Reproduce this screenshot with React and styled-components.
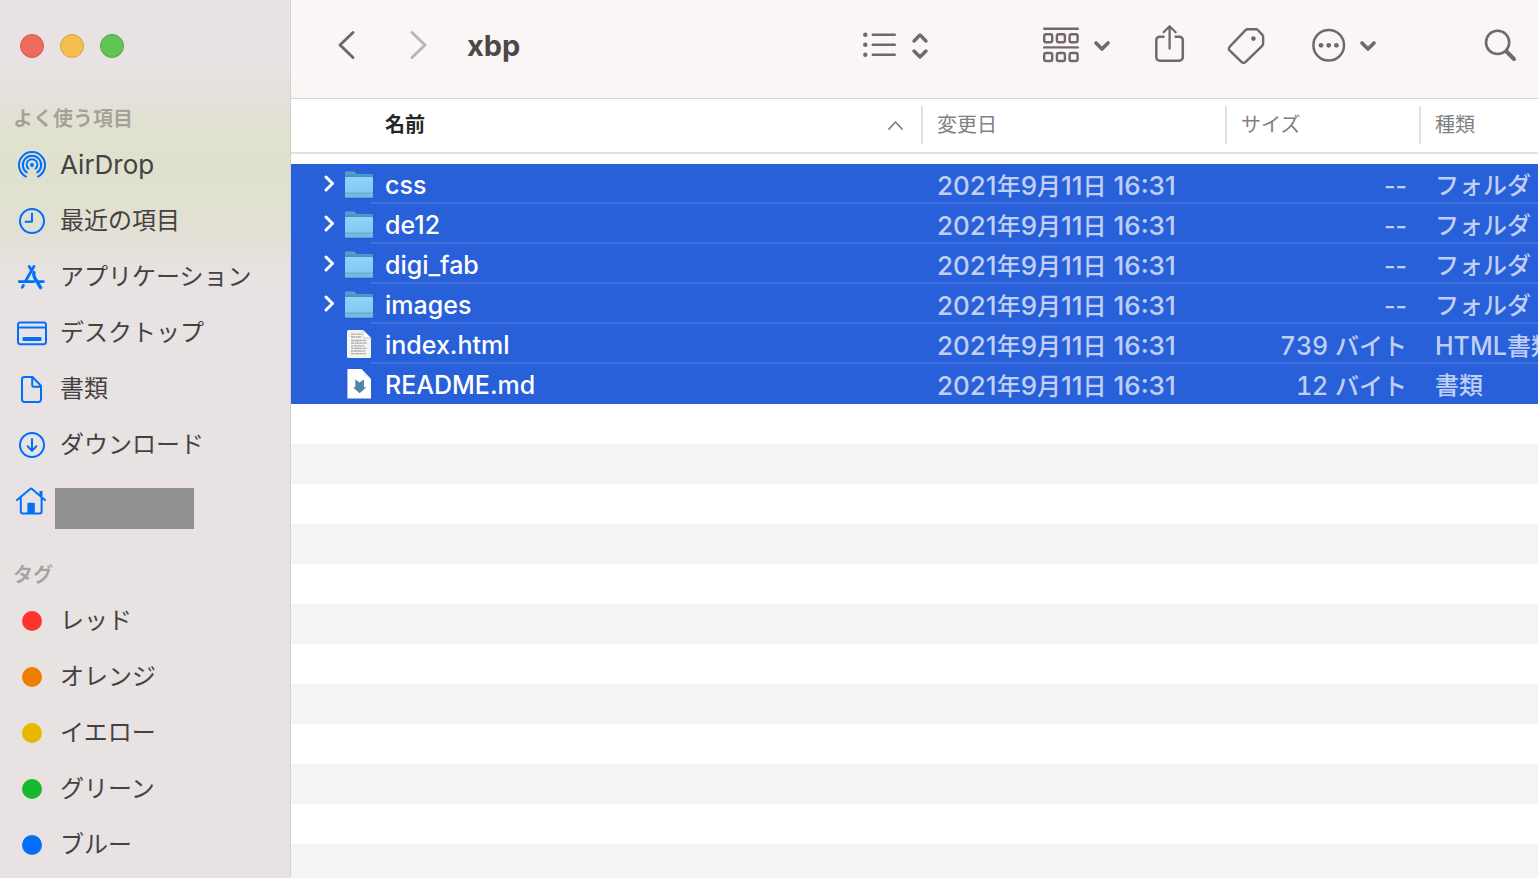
import React from "react"
import styled, { createGlobalStyle } from "styled-components"

const GlobalStyle = createGlobalStyle`
  * {
    box-sizing: border-box;
  }
  body {
    margin: 0;
    font-family: Inter, "Noto Sans CJK JP", sans-serif;
    font-size: 24px;
    line-height: 32px;
    color: #444241;
  }
  button {
    padding: 0;
    border: 0;
    background: none;
    font: inherit;
    color: inherit;
    cursor: pointer;
  }
  svg {
    display: block;
    flex: none;
    fill: none;
    stroke: currentColor;
    stroke-linecap: round;
    stroke-linejoin: round;
    overflow: visible;
  }
`

const Window = styled.div`
  display: grid;
  grid-template-columns: 291px minmax(0, 1fr);
  min-height: 100vh;
  overflow: hidden;
`
const Sidebar = styled.aside`
  border-right: 1px solid #d6d0d0;
  background: linear-gradient(
    #e8e2e2 76px,
    #e5e0d8 100px,
    #e0e1cf 132px,
    #dfe1ce 180px,
    #e2e0d4 226px,
    #e6e1dc 258px,
    #e8e2e2 276px
  );
`
const Lights = styled.div`
  display: flex;
  gap: 16px;
  height: 99px;
  padding: 34px 20px 0;
`
const Light = styled.button`
  width: 24px;
  height: 24px;
  border: 1px solid ${(props) => props.$edge};
  border-radius: 50%;
  background: ${(props) => props.$fill};
`
const Section = styled.section`
  margin-bottom: 26px;
`
const SectionTitle = styled.h2`
  height: 38px;
  margin: 0;
  padding-left: 13px;
  font-size: 20px;
  line-height: 40px;
  font-weight: 700;
  color: rgba(0, 0, 0, 0.28);
`
const SideItem = styled.button`
  display: flex;
  align-items: center;
  gap: 7px;
  width: 100%;
  height: 56px;
  padding-left: 16px;
  text-align: left;
  white-space: nowrap;

  svg {
    color: #0070fa;
    stroke-width: 2;
  }
`
const SideLabel = styled.span`
  padding-left: 5px;
`
const HiddenName = styled.span`
  align-self: flex-end;
  width: 139px;
  height: 41px;
  background: #909090;
`
const Dot = styled.span`
  width: 20px;
  height: 20px;
  margin: 0 6px;
  border-radius: 50%;
  background: ${(props) => props.$color};
`
const Main = styled.main`
  display: flex;
  flex-direction: column;
  min-width: 0;
`
const Toolbar = styled.header`
  display: flex;
  align-items: center;
  height: 99px;
  padding: 0 22px 9px 47px;
  border-bottom: 1px solid #d9d4d4;
  background: #fbf5f5;
  color: #716969;
`
const ToolButton = styled.button`
  margin-left: ${(props) => props.$space || 0}px;
  color: ${(props) => (props.$dim ? "#bcb5b5" : "inherit")};
`
const Title = styled.h1`
  flex: 1;
  margin: 0 0 0 40px;
  padding-top: 2px;
  font-size: 29px;
  line-height: 40px;
  font-weight: 700;
  color: #4b4848;
`
const FileArea = styled.div`
  flex: 1;
  overflow: hidden;
  background: repeating-linear-gradient(#fff 0 40px, #f3f5f4 40px 80px) 0 65px
    no-repeat;
`
const Table = styled.table`
  width: 100%;
  table-layout: fixed;
  border-collapse: collapse;
  font-weight: 500;
`
const HeadCell = styled.th`
  width: ${(props) => props.$width};
  padding: 0 0 10px;
  font-size: 20px;
  font-weight: ${(props) => (props.$sorted ? 700 : 400)};
  color: ${(props) => (props.$sorted ? "#262626" : "#808080")};
  text-align: left;
`
const HeadInner = styled.div`
  padding: 7px 0 8px;
  border-bottom: 2px solid #e2e2e2;
`
const HeadLabel = styled.div`
  display: flex;
  align-items: center;
  justify-content: space-between;
  height: 38px;
  padding: 0 18px 0 ${(props) => (props.$sorted ? 94 : 14)}px;
  border-left: ${(props) => (props.$sorted ? 0 : "2px solid #e2e2e2")};

  svg {
    color: #808080;
  }
`
const Row = styled.tr`
  height: 40px;
  color: #fff;
  background: #2860da;

  &:not(:last-child) {
    background: linear-gradient(#4070de, #4070de) right bottom /
      calc(100% - 80px) 2px no-repeat #2860da;
  }
`
const Cell = styled.td`
  padding: 4px 12px 0 16px;
  overflow: hidden;
  line-height: 30px;
  white-space: nowrap;
  color: #c0cff4;
  text-align: ${(props) => props.$align || "left"};
`
const KindCell = styled(Cell)`
  padding-right: 0;
`
const NameCell = styled.td`
  padding: 0;
`
const Name = styled.div`
  display: flex;
  align-items: center;
  height: 40px;
  padding-left: 32px;
`
const Disclosure = styled.button`
  width: 21px;
  height: 32px;
  visibility: ${(props) => (props.$shown ? "visible" : "hidden")};

  svg {
    margin-top: -1px;
  }
`
const FileName = styled.span`
  padding: 2px 0 0 11px;
`
const Latin = styled.span`
  font-size: ${(props) => props.$size || 25}px;
  font-variant-numeric: ${(props) => (props.$tabular ? "tabular-nums" : "normal")};
`

// Latin letters and digits are set slightly larger than the kana and kanji
const Mixed = ({ text, size, tabular }) =>
  text
    .split(/([\x20-\x7e]+)/)
    .filter(Boolean)
    .map((run, i) =>
      /^[\x20-\x7e]/.test(run) ? (
        <Latin key={i} $size={size} $tabular={tabular && /\d/.test(run)}>
          {run}
        </Latin>
      ) : (
        run
      )
    )

const AirDropIcon = () => (
  <svg width="32" height="32" viewBox="0 0 32 32">
    <path d="M10 27.6a13 13 0 1 1 12 0M10.8 23.5a9.2 9.2 0 1 1 10.4 0M12.4 19.7a5.4 5.4 0 1 1 7.2 0" />
    <circle cx="16" cy="16" r="2" fill="currentColor" stroke="none" />
  </svg>
)
const ClockIcon = () => (
  <svg width="32" height="32" viewBox="0 0 32 32">
    <circle cx="16" cy="16" r="12" />
    <path d="M16 8.5v8.2H9.5" />
  </svg>
)
const AppsIcon = () => (
  <svg width="32" height="32" viewBox="0 0 32 32">
    <g strokeWidth="2.8">
      <path d="M13.2 5.4l1.6 2.8M18 5.4L9.6 20M3.2 20.6h14.6M23 20.6h4.4M7.4 24.4l-1.2 2" />
    </g>
    <path d="M18 11.5c-.8 2.2-.2 3.8.8 5.5l5.8 9.6" strokeWidth="3.4" />
  </svg>
)
const DesktopIcon = () => (
  <svg width="32" height="32" viewBox="0 0 32 32">
    <rect x="2" y="5.6" width="28" height="21.6" rx="2.4" />
    <path d="M2 10.4h28" />
    <rect x="6.5" y="20" width="19" height="4" rx="1" fill="currentColor" stroke="none" />
  </svg>
)
const DocumentIcon = () => (
  <svg width="32" height="32" viewBox="0 0 32 32">
    <path d="M16.5 4H8.4A2.4 2.4 0 0 0 6 6.4v20.2A2.4 2.4 0 0 0 8.4 29h14.2a2.4 2.4 0 0 0 2.4-2.4V12.7zM16.2 4.5v8a1.2 1.2 0 0 0 1.2 1.2h7.2" />
  </svg>
)
const DownloadIcon = () => (
  <svg width="32" height="32" viewBox="0 0 32 32">
    <circle cx="16" cy="16" r="12" />
    <path d="M16 10v11.5M11.6 17.3l4.4 4.4 4.4-4.4" />
  </svg>
)
const HomeIcon = () => (
  <svg width="32" height="32" viewBox="0 0 32 32">
    <path d="M1 15L14.2 4a1.4 1.4 0 0 1 1.8 0L29 15M4.8 12.5v14.3a1.7 1.7 0 0 0 1.7 1.7h17.4a1.7 1.7 0 0 0 1.7-1.7V12.5" />
    <path d="M25 6v5" strokeWidth="3" strokeLinecap="butt" />
    <path d="M11.4 28v-9.3a1 1 0 0 1 1-1h5.4a1 1 0 0 1 1 1V28z" fill="currentColor" stroke="none" />
  </svg>
)

const BackIcon = () => (
  <svg width="17" height="40" viewBox="0 0 17 40" strokeWidth="3">
    <path d="M15 7.5L2 20l13 12.5" />
  </svg>
)
const ForwardIcon = () => (
  <svg width="17" height="40" viewBox="0 0 17 40" strokeWidth="3">
    <path d="M2 7.5L15 20 2 32.5" />
  </svg>
)
const ListViewIcon = () => (
  <svg width="67" height="40" viewBox="0 0 67 40" strokeWidth="2.4">
    {[9.7, 19.7, 29.7].map((y) => (
      <g key={y}>
        <circle cx="2.3" cy={y} r="2.2" fill="currentColor" stroke="none" />
        <path d={`M9.8 ${y}h22`} />
      </g>
    ))}
    <path d="M51 16l6-6 6 6M51 26l6 6 6-6" strokeWidth="3.4" />
  </svg>
)
const GroupIcon = () => (
  <svg width="68" height="40" viewBox="0 0 68 40" strokeWidth="2.4">
    <path d="M1.2 3.7h33.6M1.2 22.4h33.6" />
    {[9.2, 28].map((y) =>
      [1.2, 13.9, 26.6].map((x) => (
        <rect key={`${x}-${y}`} x={x} y={y} width="8" height="8" rx="1.8" />
      ))
    )}
    <path d="M53 18l6 6 6-6" strokeWidth="3.6" />
  </svg>
)
const ShareIcon = () => (
  <svg width="30" height="40" viewBox="0 0 30 40" strokeWidth="2.5">
    <path
      d="M9.5 11.7H4.8a3.5 3.5 0 0 0-3.5 3.5v17a3.5 3.5 0 0 0 3.5 3.5h19.5a3.5 3.5 0 0 0 3.5-3.5v-17a3.5 3.5 0 0 0-3.5-3.5h-4.7"
      strokeLinecap="butt"
    />
    <path d="M14.6 23.5v-22M8.6 7.3l6-6 6 6" strokeWidth="2.3" />
  </svg>
)
const TagIcon = () => (
  <svg width="39" height="40" viewBox="0 0 39 40" strokeWidth="2.4">
    <path d="M20.8 4.3h8.2a2.5 2.5 0 0 1 1.8.7l4.6 4.8a2.5 2.5 0 0 1 .7 1.8v7a3 3 0 0 1-.9 2.2L18.4 37.2a2.6 2.6 0 0 1-3.7 0L2.6 25.4a2.4 2.4 0 0 1 0-3.5L18.5 5.2a3 3 0 0 1 2.3-.9z" />
    <circle cx="26.4" cy="13.6" r="2.3" fill="currentColor" stroke="none" />
  </svg>
)
const MoreIcon = () => (
  <svg width="65" height="40" viewBox="0 0 65 40" strokeWidth="2.5">
    <circle cx="16.7" cy="20.3" r="15.3" />
    <g fill="currentColor" stroke="none">
      <circle cx="9" cy="20.3" r="2.4" />
      <circle cx="16.7" cy="20.3" r="2.4" />
      <circle cx="24.4" cy="20.3" r="2.4" />
    </g>
    <path d="M50 18l6 6 6-6" strokeWidth="3.6" />
  </svg>
)
const SearchIcon = () => (
  <svg width="32" height="40" viewBox="0 0 32 40" strokeWidth="2.6">
    <circle cx="13.6" cy="17.4" r="11.6" />
    <path d="M22.5 26.5l7.5 7.5" strokeWidth="4" />
  </svg>
)
const SortIcon = () => (
  <svg width="15" height="10" viewBox="0 0 15 10" strokeWidth="1.8">
    <path d="M1 9l6.5-7L14 9" />
  </svg>
)
const DisclosureIcon = () => (
  <svg width="12" height="17" viewBox="0 0 12 17" strokeWidth="3">
    <path d="M3 2l6.5 6.5L3 15" />
  </svg>
)
const FolderIcon = () => (
  <svg width="30" height="32" viewBox="0 0 30 32">
    <defs>
      <linearGradient id="folderBack" x1="0" y1="0" x2="0" y2="1">
        <stop offset="0" stopColor="#58a5d3" />
        <stop offset="1" stopColor="#2f7db5" />
      </linearGradient>
      <linearGradient id="folderFront" x1="0" y1="0" x2="0" y2="1">
        <stop offset="0" stopColor="#92d3f8" />
        <stop offset="1" stopColor="#7cc6f0" />
      </linearGradient>
    </defs>
    <g stroke="none">
      <rect x="1" y="8" width="28" height="22.6" rx="1.6" fill="#1c4a94" opacity=".6" />
      <path d="M1 5a1.5 1.5 0 0 1 1.5-1.5h7.3c1.5 0 2.2 2.6 3.8 2.6h14A1.5 1.5 0 0 1 29 7.6V15H1z" fill="url(#folderBack)" />
      <rect x="1" y="9" width="28" height="20.4" rx="1.2" fill="url(#folderFront)" />
      <path d="M1 25h28v3.2a1.2 1.2 0 0 1-1.2 1.2H2.2A1.2 1.2 0 0 1 1 28.2z" fill="#74b9df" />
      <path d="M1 24.6h28v.8H1z" fill="#559fc9" />
    </g>
  </svg>
)
const HtmlIcon = () => (
  <svg width="30" height="32" viewBox="0 0 30 32">
    <g stroke="none">
      <path d="M4.5 2h15L27 9.8V28.5a1.5 1.5 0 0 1-1.5 1.5h-21A1.5 1.5 0 0 1 3 28.5v-25A1.5 1.5 0 0 1 4.5 2z" fill="#f4f4f3" />
    </g>
    <path d="M19 2.5V8.5a1.5 1.5 0 0 0 1.5 1.5H26.8z" fill="#fff" stroke="#b9b9b9" strokeWidth=".8" />
    <g stroke="#a9a9a9" strokeWidth="1.3" strokeLinecap="butt">
      <path d="M7 6.2h10.5M7 9h10" strokeDasharray="4 .6 2 .5" />
      <path d="M7 12.5h15.5M7 15.2h16M7 20.4h16M7 25.6h15" strokeDasharray="3 .6 5 .5 2 .7" />
      <path d="M7 17.8h14M7 23h14.5" strokeDasharray="2 .7 4 .5 3 .6" />
    </g>
  </svg>
)
const MarkdownIcon = () => (
  <svg width="30" height="32" viewBox="0 0 30 32">
    <g stroke="none">
      <path d="M4 1h13.5L27 11v19.6H3.4V1.6z" fill="#fff" />
      <path d="M17.5 1L27 11c-1.5-2.2-3-3-6.5-2.8C21 5 19.8 2.7 17.5 1z" fill="#d9e2f2" />
      <path d="M11.3 11.5l4.3 3 4.3-3v7.7h2.4l-6.7 6-6.7-6h2.4z" fill="#4f86a6" />
    </g>
  </svg>
)

const places = [
  { label: "AirDrop", Icon: AirDropIcon },
  { label: "最近の項目", Icon: ClockIcon },
  { label: "アプリケーション", Icon: AppsIcon },
  { label: "デスクトップ", Icon: DesktopIcon },
  { label: "書類", Icon: DocumentIcon },
  { label: "ダウンロード", Icon: DownloadIcon },
]

const tags = [
  { label: "レッド", color: "#ff352b" },
  { label: "オレンジ", color: "#ec7e00" },
  { label: "イエロー", color: "#eab600" },
  { label: "グリーン", color: "#17b82c" },
  { label: "ブルー", color: "#0070fa" },
]

const date = "2021年9月11日 16:31"
const files = [
  { name: "css", size: "--", kind: "フォルダ", Icon: FolderIcon, folder: true },
  { name: "de12", size: "--", kind: "フォルダ", Icon: FolderIcon, folder: true },
  { name: "digi_fab", size: "--", kind: "フォルダ", Icon: FolderIcon, folder: true },
  { name: "images", size: "--", kind: "フォルダ", Icon: FolderIcon, folder: true },
  { name: "index.html", size: "739 バイト", kind: "HTML書類", Icon: HtmlIcon },
  { name: "README.md", size: "12 バイト", kind: "書類", Icon: MarkdownIcon },
]

const columns = [
  { label: "名前", width: "auto", sorted: true },
  { label: "変更日", width: "304px" },
  { label: "サイズ", width: "194px" },
  { label: "種類", width: "119px" },
]

const App = () => (
  <>
    <GlobalStyle />
    <Window>
      <Sidebar>
        <Lights>
          <Light aria-label="閉じる" $fill="#ed6b5f" $edge="#d55a4f" />
          <Light aria-label="しまう" $fill="#f5bf4f" $edge="#d9a23f" />
          <Light aria-label="拡大" $fill="#61c554" $edge="#4faa3f" />
        </Lights>
        <Section>
          <SectionTitle>よく使う項目</SectionTitle>
          {places.map(({ label, Icon }) => (
            <SideItem key={label}>
              <Icon />
              <SideLabel>
                <Mixed text={label} size={26} />
              </SideLabel>
            </SideItem>
          ))}
          <SideItem aria-label="ホーム">
            <HomeIcon />
            <HiddenName />
          </SideItem>
        </Section>
        <section>
          <SectionTitle>タグ</SectionTitle>
          {tags.map(({ label, color }) => (
            <SideItem key={label}>
              <Dot $color={color} />
              <SideLabel>{label}</SideLabel>
            </SideItem>
          ))}
        </section>
      </Sidebar>
      <Main>
        <Toolbar>
          <ToolButton aria-label="戻る">
            <BackIcon />
          </ToolButton>
          <ToolButton aria-label="進む" $space={55} $dim>
            <ForwardIcon />
          </ToolButton>
          <Title>xbp</Title>
          <ToolButton aria-label="表示">
            <ListViewIcon />
          </ToolButton>
          <ToolButton aria-label="グループ" $space={113}>
            <GroupIcon />
          </ToolButton>
          <ToolButton aria-label="共有" $space={44}>
            <ShareIcon />
          </ToolButton>
          <ToolButton aria-label="タグを編集" $space={42}>
            <TagIcon />
          </ToolButton>
          <ToolButton aria-label="その他" $space={46}>
            <MoreIcon />
          </ToolButton>
          <ToolButton aria-label="検索" $space={107}>
            <SearchIcon />
          </ToolButton>
        </Toolbar>
        <FileArea>
          <Table>
            <thead>
              <tr>
                {columns.map(({ label, width, sorted }) => (
                  <HeadCell key={label} scope="col" $width={width} $sorted={sorted}>
                    <HeadInner>
                      <HeadLabel $sorted={sorted}>
                        {label}
                        {sorted && <SortIcon />}
                      </HeadLabel>
                    </HeadInner>
                  </HeadCell>
                ))}
              </tr>
            </thead>
            <tbody>
              {files.map(({ name, size, kind, Icon, folder }) => (
                <Row key={name}>
                  <NameCell>
                    <Name>
                      <Disclosure aria-label={`${name}を開く`} $shown={folder}>
                        <DisclosureIcon />
                      </Disclosure>
                      <Icon />
                      <FileName>
                        <Mixed text={name} />
                      </FileName>
                    </Name>
                  </NameCell>
                  <Cell>
                    <Mixed text={date} size={26} />
                  </Cell>
                  <Cell $align="right">
                    <Mixed text={size} tabular />
                  </Cell>
                  <KindCell>
                    <Mixed text={kind} />
                  </KindCell>
                </Row>
              ))}
            </tbody>
          </Table>
        </FileArea>
      </Main>
    </Window>
  </>
)

export default App
